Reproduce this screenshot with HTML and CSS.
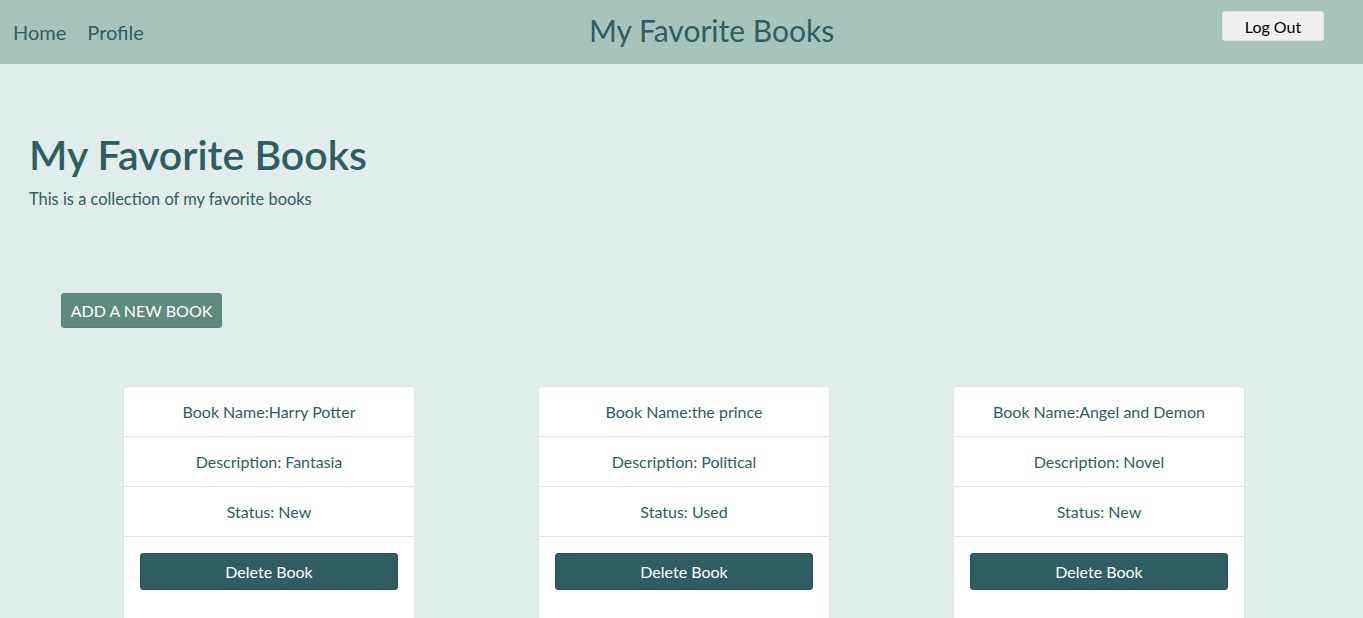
FILE: index.html
```html
<!DOCTYPE html>
<html lang="en">
<head>
<meta charset="utf-8">
<title>My Favorite Books</title>
<link rel="stylesheet" href="styles.css">
</head>
<body>
<header class="navbar">
  <nav class="nav-links">
    <a href="#" class="nav-link">Home</a>
    <a href="#" class="nav-link">Profile</a>
  </nav>
  <div class="nav-title">My Favorite Books</div>
  <div class="nav-right">
    <button class="logout">Log Out</button>
  </div>
</header>
<main class="main">
  <section class="intro">
    <h1 class="title">My Favorite Books</h1>
    <p class="subtitle">This is a collection of my favorite books</p>
  </section>
  <div class="add-wrap">
    <button class="add-btn">ADD A NEW BOOK</button>
  </div>
  <div class="cards">
    <div class="card">
      <div class="card-row">Book Name:Harry Potter</div>
      <div class="card-row">Description: Fantasia</div>
      <div class="card-row">Status: New</div>
      <div class="card-foot"><button class="del-btn">Delete Book</button></div>
    </div>
    <div class="card">
      <div class="card-row">Book Name:the prince</div>
      <div class="card-row">Description: Political</div>
      <div class="card-row">Status: Used</div>
      <div class="card-foot"><button class="del-btn">Delete Book</button></div>
    </div>
    <div class="card">
      <div class="card-row">Book Name:Angel and Demon</div>
      <div class="card-row">Description: Novel</div>
      <div class="card-row">Status: New</div>
      <div class="card-foot"><button class="del-btn">Delete Book</button></div>
    </div>
  </div>
</main>
</body>
</html>
```

FILE: styles.css
```css
* { box-sizing: border-box; }
html, body { margin: 0; padding: 0; }
body {
  font-family: "Lato", "Open Sans", sans-serif;
  background: #dfeeea;
  color: #2f5d62;
  overflow: hidden;
  height: 618px;
}
.navbar {
  height: 64px;
  background: #a7c4bc;
  display: grid;
  grid-template-columns: 589px auto 1fr;
  align-items: center;
  border-bottom: 1px solid #a3bfb7;
}
.nav-links {
  display: flex;
  gap: 21px;
  padding-left: 13px;
  padding-top: 1px;
}
.nav-link {
  color: #2f5d62;
  text-decoration: none;
  font-size: 20px;
}
.nav-title {
  font-size: 30px;
  color: #2f5d62;
  padding-bottom: 3px;
}
.nav-right {
  display: flex;
  justify-content: flex-end;
  padding-right: 39px;
  align-self: start;
  padding-top: 11px;
}
.logout {
  width: 102px;
  height: 30px;
  background: #efefef;
  border: 1px solid #e6e6e6;
  border-radius: 3px;
  font-family: inherit;
  font-size: 16px;
  color: #000;
}
.main { padding-top: 66px; }
.intro { padding-left: 29px; }
.title {
  margin: 0;
  font-size: 41px;
  font-weight: 600;
  line-height: 1.2;
}
.subtitle {
  margin: 10px 0 0;
  font-size: 16.4px;
}
.add-wrap {
  padding-left: 61px;
  margin-top: 85px;
}
.add-btn {
  width: 161px;
  height: 35px;
  background: #5e8b7e;
  color: #fff;
  border: 1px solid #55837a;
  border-radius: 3px;
  font-family: inherit;
  font-size: 16px;
}
.cards {
  display: flex;
  gap: 123px;
  padding-left: 123px;
  margin-top: 58px;
}
.card {
  width: 292px;
  height: 260px;
  background: #fff;
  border: 1px solid #e3e3e3;
  border-radius: 4px;
}
.card-row {
  height: 50px;
  border-bottom: 1px solid #e3e3e3;
  display: flex;
  align-items: center;
  justify-content: center;
  font-size: 16px;
}
.card-foot {
  padding: 16px 16px;
}
.del-btn {
  width: 100%;
  height: 37px;
  background: #2f5d62;
  color: #fff;
  border: 1px solid #2a5458;
  border-radius: 3px;
  font-family: inherit;
  font-size: 16px;
}
```
